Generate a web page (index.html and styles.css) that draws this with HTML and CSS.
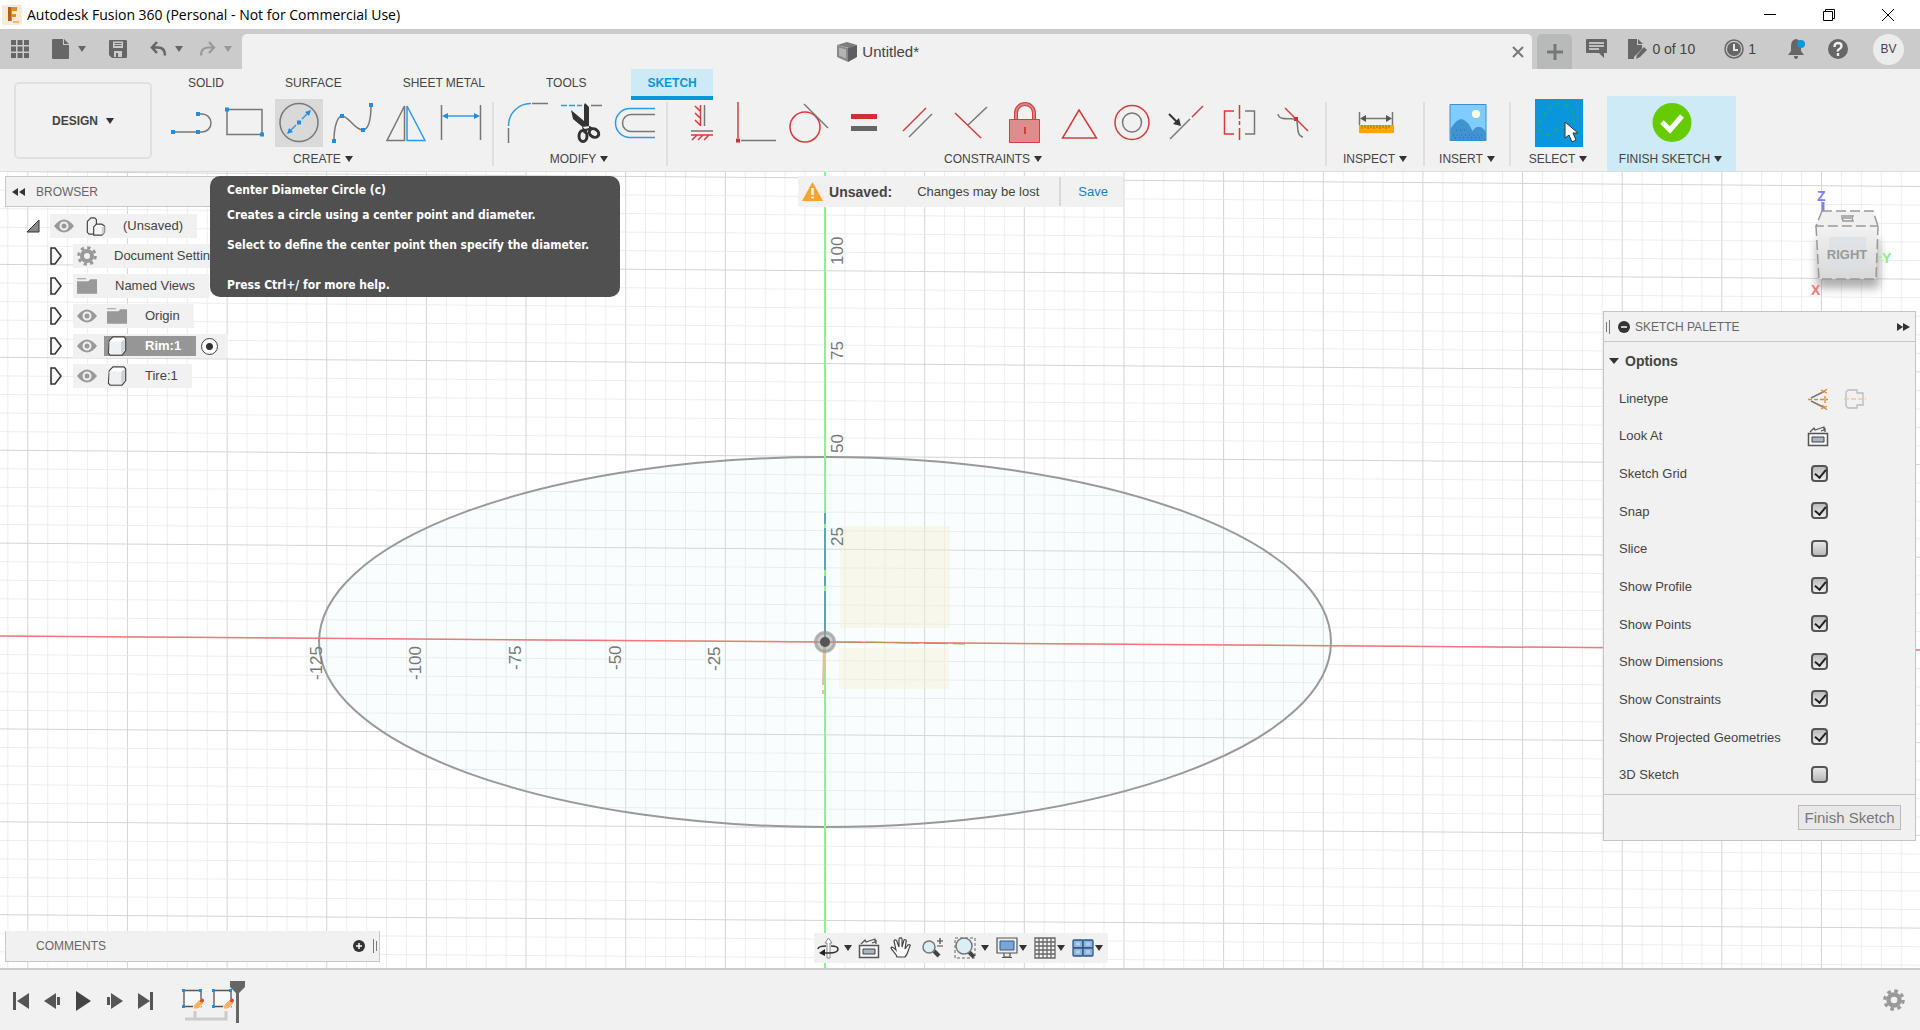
FILE: index.html
```html
<!DOCTYPE html>
<html lang="en">
<head>
<meta charset="utf-8">
<title>Autodesk Fusion 360 (Personal - Not for Commercial Use)</title>
<link rel="stylesheet" href="styles.css">
</head>
<body>
<header class="titlebar">
  <svg class="app-logo" width="20" height="20" viewBox="0 0 20 20"><rect width="20" height="20" rx="1" fill="#fbe9d7"/><path d="M6 2h9v4h-5v3h4v3h-4v4H6z" fill="#e08a2c"/><path d="M6 2h3v14H6z" fill="#b45f14"/><path d="M11 16h6v2h-6z" fill="#f0b878"/></svg>
  <span class="title-text">Autodesk Fusion 360 (Personal - Not for Commercial Use)</span>
  <div class="window-buttons">
    <button aria-label="Minimize"><svg width="14" height="14" viewBox="0 0 14 14"><path d="M1 6.500h12" class="win"/></svg></button>
    <button aria-label="Restore"><svg width="14" height="14" viewBox="0 0 14 14"><path d="M1.500 3.500h9v9h-9zM3.500 3.500v-2h9v9h-2" class="win"/></svg></button>
    <button aria-label="Close"><svg width="14" height="14" viewBox="0 0 14 14"><path d="M1 1l12 12M13 1L1 13" class="win"/></svg></button>
  </div>
</header>

<div class="appbar">
  <div class="quick">
    <button class="q-grid" aria-label="Data panel"><svg width="18" height="18" viewBox="0 0 18 18"><path d="M0 0h5v5H0zM6.500 0h5v5h-5zM13 0h5v5h-5zM0 6.500h5v5H0zM6.500 6.500h5v5h-5zM13 6.500h5v5h-5zM0 13h5v5H0zM6.500 13h5v5h-5zM13 13h5v5h-5z" fill="#666"/></svg></button>
    <button class="q-file" aria-label="File"><svg width="18" height="20" viewBox="0 0 18 20"><path d="M1 0h10v6h6v13q0 1-1 1H1q-1 0-1-1V1q0-1 1-1zM12 0l5 5h-5z" fill="#666"/></svg><i class="tri"></i></button>
    <button class="q-save" aria-label="Save"><svg width="18" height="18" viewBox="0 0 18 18"><path fill-rule="evenodd" d="M1 0h16q1 0 1 1v16q0 1-1 1H3l-3-3V1q0-1 1-1zM4 1.500V8h10V1.500zM5 11v6h8v-6zM7 13h2v4H7zM5.500 3h7v1h-7zM5.500 5h7v1h-7z" fill="#666"/></svg></button>
    <button class="q-undo" aria-label="Undo"><svg width="17" height="17" viewBox="0 0 17 17"><path d="M7 1L2 6.500 7 12M2 6.500h6c5 0 7 3 7 8" fill="none" stroke="#666" stroke-width="2.600"/></svg><i class="tri"></i></button>
    <button class="q-redo" aria-label="Redo"><svg width="17" height="17" viewBox="0 0 17 17"><path d="M10 1l5 5.500-5 5.500M15 6.500H9c-5 0-7 3-7 8" fill="none" stroke="#999" stroke-width="2.200"/></svg><i class="tri"></i></button>
  </div>
  <div class="doc-tab">
    <svg width="20" height="20" viewBox="0 0 20 20"><path d="M0 3l10-3 10 3-8 3z" fill="#7c7c7c"/><path d="M0 3l11 3v14L0 15z" fill="#8a8a8a"/><path d="M2 5.500l7 2v9l-7-3z" fill="#b4b4b4"/><path d="M11 6l9-3v12l-9 5z" fill="#5e5e5e"/></svg>
    <span>Untitled*</span>
    <button class="tab-close" aria-label="Close tab"><svg width="12" height="12" viewBox="0 0 12 12"><path d="M1 1l10 10M11 1L1 11" stroke="#777" stroke-width="2"/></svg></button>
  </div>
  <button class="new-tab" aria-label="New tab"><svg width="18" height="18" viewBox="0 0 18 18"><path d="M9 1v16M1 9h16" stroke="#777" stroke-width="3"/></svg></button>
  <div class="status">
    <button aria-label="Comments"><svg width="21" height="20" viewBox="0 0 21 20"><path d="M1 0h19q1 0 1 1v13h-3v5l-5-5H0V1q0-1 1-1z" fill="#666"/><path d="M3 4h15M3 7h15M3 10h10" stroke="#ddd" stroke-width="1.500"/></svg></button>
    <button class="s-docs"><svg width="20" height="20" viewBox="0 0 20 20"><path d="M0 0h9v6h5v4L6 18v2H0zM10 0l5 5h-5z" fill="#666"/><path d="M8 20l1-4 7-8 3 3-7 7z" fill="#666"/></svg><span>0 of 10</span></button>
    <button class="s-jobs"><svg width="20" height="20" viewBox="0 0 20 20"><circle cx="10" cy="10" r="9" fill="none" stroke="#666" stroke-width="1.500"/><circle cx="10" cy="10" r="7" fill="#666"/><path d="M10 5v6h4" fill="none" stroke="#e6e6e6" stroke-width="2"/></svg><span>1</span></button>
    <button class="s-bell" aria-label="Notifications"><svg width="19" height="20" viewBox="0 0 19 20"><path d="M9 0q5 1 5 7v5l3 4H1l3-4V7q0-6 5-7zM7 17h4q0 3-2 3t-2-3z" fill="#666"/><circle cx="14" cy="5" r="4" fill="#0a96e0"/></svg></button>
    <button class="s-help" aria-label="Help"><svg width="20" height="20" viewBox="0 0 20 20"><circle cx="10" cy="10" r="10" fill="#666"/><path d="M6.500 8q0-4 3.500-4t3.500 3q0 2-2 3t-1.500 2.500M10 14v3" fill="none" stroke="#eee" stroke-width="2.400"/></svg></button>
    <button class="avatar">BV</button>
  </div>
</div>

<div class="ribbon">
  <button class="workspace">DESIGN <i class="tri"></i></button>
  <div class="ribbon-main">
    <nav class="tabs">
      <a href="#solid">SOLID</a><a href="#surface">SURFACE</a><a href="#sheet">SHEET METAL</a><a href="#tools">TOOLS</a><a href="#sketch" class="active">SKETCH</a>
    </nav>
    <div class="groups">
      <section class="group create">
        <div class="tools">
          <button aria-label="Line"><svg viewBox="0 0 48 48"><path class="g" d="M6 33h25M31 15h4a9 9 0 0 1 0 18h-4"/><path class="bf" d="M4 31h4v4H4zM29 31h4v4h-4zM29 13h4v4h-4z"/></svg></button>
          <button aria-label="Rectangle"><svg viewBox="0 0 48 48"><path class="g" d="M6 10.500h35v25H6z"/><path class="bf" d="M4 8.500h4v4H4zM39 33.500h4v4h-4z"/></svg></button>
          <button class="on" aria-label="Circle"><svg viewBox="0 0 48 48"><circle class="g" cx="24" cy="23.500" r="19"/><path class="b" d="M14 33l7-7M27 20l7-7"/><path class="bf" d="M22 21.500h4v4h-4zM12 35l2-6 4 4zM36 11l-6 2 4 4z"/></svg></button>
          <button aria-label="Spline"><svg viewBox="0 0 48 48"><path class="g" d="M5 42C5 26 9 17 13 17c7 0 12 14 21 14 7-1 8-13 8-25"/><path class="bf" d="M3 40h4v4H3zM11 15h4v4h-4zM32 29h4v4h-4zM40 4h4v4h-4z"/></svg></button>
          <button aria-label="Mirror"><svg viewBox="0 0 48 48"><path class="g" d="M4 41.500h17.500V7z"/><path class="b" d="M24 7v34.500h18z"/></svg></button>
          <button aria-label="Sketch dimension"><svg viewBox="0 0 48 48"><path class="g" d="M4.500 6v35M43.500 6v35"/><path class="b" d="M8 17h32"/><path class="bf" d="M5 17l6-3v6zM43 17l-6-3v6z"/></svg></button>
        </div>
        <button class="group-label">CREATE <i class="tri"></i></button>
      </section>
      <section class="group modify">
        <div class="tools">
          <button aria-label="Fillet"><svg viewBox="0 0 48 48"><path class="g" d="M28 4.500h16M4.500 29v15"/><path class="b" d="M4.500 27A22 22 0 0 1 27 4.500"/></svg></button>
          <button aria-label="Trim"><svg viewBox="0 0 48 48"><path class="b" stroke-dasharray="6 2" d="M3 6.500h21"/><path class="g" d="M33 6.500h11"/><path d="M13 11l2 9 12 10 4-1V8l-4-4-1 2v16zM24 28l8-1 4 3-6 1-4 4z" fill="#333"/><g fill="none" stroke="#333" stroke-width="3"><ellipse cx="25" cy="37" rx="4" ry="5.500"/><ellipse cx="36" cy="34" rx="5" ry="4" transform="rotate(35 36 34)"/></g></svg></button>
          <button aria-label="Offset"><svg viewBox="0 0 48 48"><path class="b" stroke-width="2" d="M43 9.500H18a14.500 14.500 0 0 0 0 29h25"/><path class="g" d="M43 15.500H19a8.500 8.500 0 0 0 0 17h24"/></svg></button>
        </div>
        <button class="group-label">MODIFY <i class="tri"></i></button>
      </section>
      <section class="group constraints">
        <div class="tools">
          <button aria-label="Horizontal/Vertical"><svg viewBox="0 0 48 48"><path class="g" d="M26.500 6v21M13 32h22"/><path class="r" d="M22.500 6v21M22 12l-5-5M22 19l-5-5M22 26l-5-5M13 36h22M14 41l5-5M20 41l5-5M26 41l5-5"/></svg></button>
          <button aria-label="Coincident"><svg viewBox="0 0 48 48"><path class="r" d="M6 3v36"/><path class="g" d="M9 41.500h35"/><path class="rf" d="M4 39.500h4v4H4z"/></svg></button>
          <button aria-label="Tangent"><svg viewBox="0 0 48 48"><circle class="r" cx="19" cy="28" r="15"/><path class="g" d="M18 5l24 24"/></svg></button>
          <button aria-label="Equal"><svg viewBox="0 0 48 48"><path class="rf" d="M11 15h26v5H11z"/><path fill="#666" d="M11 27h26v5H11z"/></svg></button>
          <button aria-label="Parallel"><svg viewBox="0 0 48 48"><path class="r" d="M9 32L32 9"/><path class="g" d="M15 38l23-23"/></svg></button>
          <button aria-label="Perpendicular"><svg viewBox="0 0 48 48"><path class="r" d="M7 14l26 25"/><path class="g" d="M20 26L39 8"/></svg></button>
          <button aria-label="Fix"><svg viewBox="0 0 48 48"><path d="M14 20v-6a9 9 0 0 1 18 0v6" fill="none" stroke="#cf4040" stroke-width="4"/><path d="M14 20v-6a9 9 0 0 1 18 0v6" fill="none" stroke="#e08080" stroke-width="2"/><path d="M7.500 20.500h30v23h-30z" fill="#df8c8c" stroke="#cf4040"/><path d="M23 28v7" stroke="#c22" stroke-width="1.500"/></svg></button>
          <button aria-label="Midpoint"><svg viewBox="0 0 48 48"><path class="r" d="M6.500 39h34L23 11z"/></svg></button>
          <button aria-label="Concentric"><svg viewBox="0 0 48 48"><circle class="r" cx="22" cy="23.500" r="17"/><circle class="g" cx="22" cy="23.500" r="9.500"/></svg></button>
          <button aria-label="Collinear"><svg viewBox="0 0 48 48"><path class="g" d="M6 40l20-20"/><path class="r" d="M28 18L39 7"/><path d="M5 15l8 8" stroke="#333" stroke-width="2"/><path d="M17 27l-8-2 6-6z" fill="#333"/></svg></button>
          <button aria-label="Symmetry"><svg viewBox="0 0 48 48"><path class="r" d="M16 12H6.500v23H16M21.500 6v14M21.500 22v4M21.500 29v12"/><path class="g" d="M27 12h9.500v23H27"/></svg></button>
          <button aria-label="Curvature"><svg viewBox="0 0 48 48"><path class="g" d="M6 15c1 7 12 4 16 5M25 22c1 8 0 15 6 16"/><path class="r" d="M13 9l23 23"/><path class="rf" d="M22 18h4v4h-4z"/></svg></button>
        </div>
        <button class="group-label">CONSTRAINTS <i class="tri"></i></button>
      </section>
      <section class="group inspect">
        <div class="tools"><button aria-label="Measure"><svg viewBox="0 0 48 48"><path class="g" d="M7.500 13v13M40.500 13v13M10 19.500h28"/><path d="M8 19.500l6-3.500v7zM40 19.500l-6-3.500v7z" fill="#555"/><path d="M7 26h35v8H7z" fill="#ffa500"/><path d="M10 26v4M13 26v3M16 26v4M19 26v3M22 26v4M25 26v3M28 26v4M31 26v3M34 26v4M37 26v3" stroke="#a06a20"/></svg></button></div>
        <button class="group-label">INSPECT <i class="tri"></i></button>
      </section>
      <section class="group insert">
        <div class="tools"><button aria-label="Insert image"><svg viewBox="0 0 48 48"><path d="M6 5.500h36v36H6z" fill="#80ccff" stroke="#3a8fcf"/><circle cx="32" cy="15" r="4" fill="#fffde0"/><path d="M6.500 30q6-10 11-10 6 1 11 12 4-5 7-4 3 0 6.500 5v8h-35.500z" fill="#3f93cf"/><path d="M9 36h30M12 31h10M11 39h28" stroke="#2a6fa8" stroke-dasharray="1 3"/></svg></button></div>
        <button class="group-label">INSERT <i class="tri"></i></button>
      </section>
      <section class="group select">
        <div class="tools"><button aria-label="Select"><svg viewBox="0 0 48 48"><path d="M0 0h48v48H0z" fill="#0a96db"/><path d="M30 28c8-1 11-6 8-14-3-9-12-11-20-8C10 9 9 16 5 24c-2 6 1 12 8 12 8-1 5-7 17-8z" fill="none" stroke="#1fa97a" stroke-width="1.500" stroke-dasharray="5 4"/><path d="M30 23v16l4-3 3 7 4-2-3-7h5z" fill="#fff" stroke="#333"/></svg></button></div>
        <button class="group-label">SELECT <i class="tri"></i></button>
      </section>
      <section class="group finish">
        <div class="tools"><button aria-label="Finish sketch"><svg viewBox="0 0 48 48"><circle cx="24" cy="23.500" r="19.500" fill="#6c0"/><path d="M14 23l8 8 12-14" fill="none" stroke="#fff" stroke-width="5"/></svg></button></div>
        <button class="group-label">FINISH SKETCH <i class="tri"></i></button>
      </section>
    </div>
  </div>
</div>

<main class="workspace-area">
  <svg class="scene" viewBox="0 172 1920 796" preserveAspectRatio="xMidYMid slice">
    <g id="grid"></g>
    <ellipse cx="825" cy="642" rx="506" ry="185" fill="#d8f4fa" fill-opacity=".16"/>
    <path d="M840 526h110v102H840zM839 648h110v41H839z" fill="#f4eed2" fill-opacity=".4"/>
    <ellipse cx="825" cy="642" rx="506" ry="185" fill="none" stroke="#999" stroke-width="2"/>
    <path d="M0 636L1920 650" stroke="#f07878" stroke-width="1.500"/>
    <path d="M825 172v796" stroke="#8ef08e" stroke-width="2"/>
    <path d="M825 513v11m0 4v42m0 6v10m0 5v46" stroke="#5aa5b8" stroke-width="2"/>
    <path d="M824 645l-1 40m0 5v4" stroke="#f5b89a" stroke-width="2"/>
    <path d="M837 642h28l40 1 60 1" stroke="#a8a050" fill="none" stroke-dasharray="24 5"/>
    <circle cx="825" cy="642" r="9.500" fill="#999" fill-opacity=".5" stroke="#999" stroke-width="3" stroke-opacity=".7"/><circle cx="825" cy="642" r="5" fill="#555"/>
    <g class="axis-label">
      <text transform="translate(843 265) rotate(-90)">100</text>
      <text transform="translate(843 360) rotate(-90)">75</text>
      <text transform="translate(843 453) rotate(-90)">50</text>
      <text transform="translate(843 546) rotate(-90)">25</text>
      <text transform="translate(322 680) rotate(-90)">-125</text>
      <text transform="translate(421 680) rotate(-90)">-100</text>
      <text transform="translate(521 670) rotate(-90)">-75</text>
      <text transform="translate(621 670) rotate(-90)">-50</text>
      <text transform="translate(720 671) rotate(-90)">-25</text>
    </g>
  </svg>

  <div class="col left">
    <section class="browser">
      <header class="panel-head"><svg width="14" height="10" viewBox="0 0 14 10"><path d="M7 1v8L1 5zM14 1v8L8 5z" fill="#333"/></svg><span>BROWSER</span></header>
      <ul class="tree">
        <li class="root"><svg class="twist open" width="16" height="16" viewBox="0 0 16 16"><path d="M14 2v12H2z" fill="#888" stroke="#333"/></svg><span class="node"><svg class="eye" viewBox="0 0 20 16"><use href="#eye"/></svg><svg class="ico" viewBox="0 0 22 22"><path d="M2 6l4-4h4l2 2v15l-1 1H4l-2-2z" fill="#f0f1f2" stroke="#444" stroke-width="1.300"/><path d="M9 12l3-3h6l3 2v7l-3 3H9z" fill="#f7f7f7" stroke="#444" stroke-width="1.300"/><path d="M18 13l3-2v7l-3 3z" fill="#ccd0d4"/></svg><span class="t">(Unsaved)</span></span></li>
        <li><svg class="twist" viewBox="0 0 16 20"><use href="#tw"/></svg><span class="node wide"><svg class="eye gear" viewBox="0 0 20 20"><use href="#gear"/></svg><span class="t">Document Settings</span></span></li>
        <li><svg class="twist" viewBox="0 0 16 20"><use href="#tw"/></svg><span class="node"><svg class="ico first" viewBox="0 0 22 20"><use href="#folder"/></svg><span class="t">Named Views</span></span></li>
        <li><svg class="twist" viewBox="0 0 16 20"><use href="#tw"/></svg><span class="node"><svg class="eye" viewBox="0 0 20 16"><use href="#eye"/></svg><span class="pick"><svg class="ico" viewBox="0 0 22 20"><use href="#folder"/></svg><span class="t">Origin</span></span></span></li>
        <li><svg class="twist" viewBox="0 0 16 20"><use href="#tw"/></svg><span class="node"><svg class="eye" viewBox="0 0 20 16"><use href="#eye"/></svg><span class="pick sel"><svg class="ico" viewBox="0 0 22 22"><use href="#cube"/></svg><span class="t">Rim:1</span></span><input class="dot" type="radio" name="component" aria-label="Activate Rim:1" checked></span></li>
        <li><svg class="twist" viewBox="0 0 16 20"><use href="#tw"/></svg><span class="node"><svg class="eye" viewBox="0 0 20 16"><use href="#eye"/></svg><span class="pick"><svg class="ico" viewBox="0 0 22 22"><use href="#cube"/></svg><span class="t">Tire:1</span></span></span></li>
      </ul>
    </section>
    <div class="tooltip" role="tooltip"><p>Center Diameter Circle (c)</p><p>Creates a circle using a center point and diameter.</p><p class="more">Select to define the center point then specify the diameter.</p><p class="hint">Press Ctrl+/ for more help.</p></div>
    <section class="comments"><span>COMMENTS</span><button aria-label="Expand comments"><svg width="12" height="12" viewBox="0 0 12 12"><circle cx="6" cy="6" r="6" fill="#333"/><path d="M6 3v6M3 6h6" stroke="#fff" stroke-width="1.500"/></svg></button><svg class="grip" width="4" height="14" viewBox="0 0 4 14"><path d="M.5 0v14M3.500 2v10" stroke="#777"/></svg></section>
  </div>

  <div class="col middle">
    <div class="message"><svg width="21" height="20" viewBox="0 0 21 20"><path d="M10.500 0L21 19H0z" fill="#f9a32b"/><path d="M10.500 6v7M10.500 14.500v2" stroke="#fff" stroke-width="2.500"/></svg><strong>Unsaved:</strong><span>Changes may be lost</span><a href="#save">Save</a></div>
    <div class="navbar">
      <button class="n-orbit" aria-label="Orbit"><svg width="22" height="22" viewBox="0 0 22 22"><path d="M10 21V6H8l3.500-5L15 6h-2v15z" fill="#fff" stroke="#888"/><path d="M9 9c-4 0-8 1-8 3M14 9c5 0 7 1 7 3 0 3-5 4-9 4H6" fill="none" stroke="#333" stroke-width="1.600"/><path d="M2 16l6-4v7z" fill="#222"/></svg><i class="tri"></i></button>
      <button class="n-look" aria-label="Look at"><svg width="22" height="22" viewBox="0 0 22 22"><use href="#look"/></svg></button>
      <button class="n-hand" aria-label="Pan"><svg width="22" height="22" viewBox="0 0 22 22"><path d="M7 20c-1-4-5-6-6-9 1-2 3 0 5 2L4 4c1-2 3-1 3 1l2 5V2c1-2 3-1 3 0v8l2-7c1-1 3 0 2 2l-1 7 3-4c1-1 3 0 2 1-2 4-2 8-5 11z" fill="#fff" stroke="#444" stroke-width="1.200"/></svg></button>
      <button class="n-zoom" aria-label="Zoom"><svg width="22" height="22" viewBox="0 0 22 22"><path d="M12 14l5 5" stroke="#444" stroke-width="4"/><circle cx="7" cy="10" r="6" fill="#dceef5" stroke="#777" stroke-width="1.500"/><path d="M15 4h6M18 1v6M15 9h6" stroke="#444" stroke-width="1.200"/></svg></button>
      <button class="n-fit" aria-label="Zoom window"><svg width="22" height="22" viewBox="0 0 22 22"><path d="M1 1h20v20H1z" fill="none" stroke="#666" stroke-dasharray="3 2"/><path d="M14 14l6 6" stroke="#444" stroke-width="4"/><circle cx="10" cy="9" r="8" fill="#dceef5" stroke="#777" stroke-width="1.500"/></svg><i class="tri"></i></button>
      <button class="n-disp" aria-label="Display settings"><svg width="22" height="22" viewBox="0 0 22 22"><path d="M1 1h20v15H1zM8 16v4h6v-4M6 20.500h10" fill="#eee" stroke="#555" stroke-width="1.200"/><path d="M4 4h14v9H4z" fill="#7aa6d4" stroke="#345d8c"/></svg><i class="tri"></i></button>
      <button class="n-grid" aria-label="Grid settings"><svg width="22" height="22" viewBox="0 0 22 22"><path d="M1 1h20v20H1zM5 1v20M9 1v20M13 1v20M17 1v20M1 5h20M1 9h20M1 13h20M1 17h20" fill="#f4f4f4" stroke="#666" stroke-width="1.300"/></svg><i class="tri"></i></button>
      <button class="n-view" aria-label="Viewports"><svg width="22" height="22" viewBox="0 0 22 22"><g fill="#8db4de" stroke="#2f5480" stroke-width="1.300"><rect x="1" y="3" width="10" height="8" rx="1"/><rect x="11" y="3" width="10" height="8" rx="1"/><rect x="1" y="11" width="10" height="8" rx="1"/><rect x="11" y="11" width="10" height="8" rx="1"/></g><path d="M4 7h4M14 7h4M4 15h4M14 15h4" stroke="#b4d0ee" stroke-width="3"/></svg><i class="tri"></i></button>
    </div>
  </div>

  <div class="col right">
    <svg class="viewcube" width="90" height="124" viewBox="0 -4 90 124">
      <defs><filter id="soft" x="-30%" y="-30%" width="160%" height="160%"><feGaussianBlur stdDeviation="5"/></filter><linearGradient id="face" x1="0" y1="0" x2="0" y2="1"><stop offset="0" stop-color="#f2f2f2"/><stop offset="1" stop-color="#d8d8d8"/></linearGradient></defs>
      <path d="M14 50h62v48H14z" fill="#777" filter="url(#soft)" opacity=".6"/>
      <path d="M20 12v12" stroke="#8080f0" stroke-width="3"/>
      <path d="M19 21h51l5 15H13z" fill="#f0f0f0"/><path d="M13 36h62l-2 53H16z" fill="url(#face)"/>
      <path d="M26 47h37v32H26z" fill="#dcdfe3" opacity=".7"/>
      <path d="M19 21h51l5 15M19 21l-6 15h62M13 36l3 53h57l2-53" fill="none" stroke="#999" stroke-width="1.500" stroke-dasharray="10 4"/>
      <path d="M38 26h12l-1 2 1 3H40l-1-3h9" fill="none" stroke="#999" stroke-width="1.500"/>
      <text x="44" y="69" text-anchor="middle" class="cube-text">RIGHT</text>
      <text x="14" y="11" class="ax z">Z</text><text x="79" y="73" class="ax y">Y</text><text x="8" y="105" class="ax x">X</text><path d="M75 67h4" stroke="#8e8"/>
    </svg>
    <section class="palette">
      <header class="palette-head"><svg class="grip" width="4" height="14" viewBox="0 0 4 14"><path d="M.5 2v10M3.500 0v14" stroke="#777"/></svg><svg width="12" height="12" viewBox="0 0 12 12"><circle cx="6" cy="6" r="6" fill="#333"/><path d="M3 6h6" stroke="#fff" stroke-width="1.500"/></svg><span>SKETCH PALETTE</span><svg class="collapse" width="13" height="10" viewBox="0 0 13 10"><path d="M0 1v8l6-4zM6 1v8l7-4z" fill="#333"/></svg></header>
      <h2><i class="tri big"></i>Options</h2>
      <div class="options">
        <div class="opt"><span>Linetype</span><button aria-label="Construction"><svg width="22" height="22" viewBox="0 0 22 22"><path d="M4 10L18 3M4 13l14 7" stroke="#777" stroke-width="1.500"/><path d="M1 11.500h20" stroke="#e08a3c" stroke-width="1.500" stroke-dasharray="4 2"/><path d="M18 8v7M14 2l6 3M20 1l-5 4M14 21l6-3M15 17l5 5" stroke="#e08a3c" stroke-width="1.300"/></svg></button><button aria-label="Centerline"><svg width="22" height="22" viewBox="0 0 22 22"><path d="M2 8V4l2-2h9v3h6v4M2 14v4l2 2h9v-3h6v-4M2 8v6M19 9v4" fill="none" stroke="#bbb" stroke-width="1.300"/><path d="M0 11h22" stroke="#ecc9a4" stroke-width="1.300" stroke-dasharray="5 2"/></svg></button></div>
        <div class="opt"><span>Look At</span><button aria-label="Look At"><svg width="22" height="22" viewBox="0 0 22 22"><use href="#look"/></svg></button></div>
        <label class="opt"><span>Sketch Grid</span><input type="checkbox" checked></label>
        <label class="opt"><span>Snap</span><input type="checkbox" checked></label>
        <label class="opt"><span>Slice</span><input type="checkbox"></label>
        <label class="opt"><span>Show Profile</span><input type="checkbox" checked></label>
        <label class="opt"><span>Show Points</span><input type="checkbox" checked></label>
        <label class="opt"><span>Show Dimensions</span><input type="checkbox" checked></label>
        <label class="opt"><span>Show Constraints</span><input type="checkbox" checked></label>
        <label class="opt"><span>Show Projected Geometries</span><input type="checkbox" checked></label>
        <label class="opt"><span>3D Sketch</span><input type="checkbox"></label>
      </div>
      <footer><button class="finish-btn">Finish Sketch</button></footer>
    </section>
  </div>
</main>

<footer class="timeline">
  <div class="player">
    <button aria-label="Go to start"><svg width="17" height="20" viewBox="0 0 17 20"><path d="M0 1h3v18H0zM16 2v16L4 10z" fill="#555"/></svg></button>
    <button aria-label="Step back"><svg width="17" height="20" viewBox="0 0 17 20"><path d="M12 2v16L0 10zM13 6h3v8h-3z" fill="#555"/></svg></button>
    <button aria-label="Play"><svg width="17" height="20" viewBox="0 0 17 20"><path d="M1 0v20l15-10z" fill="#444"/></svg></button>
    <button aria-label="Step forward"><svg width="17" height="20" viewBox="0 0 17 20"><path d="M5 2v16l12-8zM1 6h3v8H1z" fill="#555"/></svg></button>
    <button aria-label="Go to end"><svg width="17" height="20" viewBox="0 0 17 20"><path d="M1 2v16l12-8zM13 1h3v18h-3z" fill="#555"/></svg></button>
  </div>
  <svg class="history" width="66" height="44" viewBox="0 0 66 44">
    <path d="M4 38h41v-8M14 30v8" fill="none" stroke="#ccc" stroke-width="3"/>
    <g id="feat"><path d="M3 9.500h17v16H3z" fill="#f8f8f8" stroke="#555" stroke-width="1.300"/><path d="M1 8h3v3H1zM18 8h3v3h-3zM1 24h3v3H1z" fill="#1a8fe3"/><path d="M12 28l1-4 6-6 4 4-6 6z" fill="#fbb450" stroke="#f1f1f1"/><circle cx="21" cy="19.500" r="2" fill="#d44"/></g>
    <use href="#feat" x="30"/>
    <path d="M49 0h15v6l-6 6v30h-3V12l-6-6z" fill="#666"/>
  </svg>
  <button class="settings" aria-label="Settings"><svg width="22" height="22" viewBox="0 0 20 20"><use href="#gear"/></svg></button>
</footer>

<svg width="0" height="0" class="symbols">
  <defs>
    <g id="eye"><path fill-rule="evenodd" d="M0 8Q10-5 20 8 10 21 0 8zM10 3.500a4.500 4.500 0 1 0 0 9 4.500 4.500 0 0 0 0-9z" fill="#999"/><circle cx="10" cy="8" r="2.500" fill="#999"/></g>
    <path id="tw" d="M3 2h4l6 8-6 8H3z" fill="#fafafa" stroke="#333" stroke-width="1.600"/>
    <path id="folder" d="M0 2h9l1 1H0zM0 5h12l2-2h7v15H0z" fill="#999"/>
    <g id="gear"><circle cx="10" cy="10" r="5" fill="none" stroke="#999" stroke-width="4"/><circle cx="10" cy="10" r="8.300" fill="none" stroke="#999" stroke-width="3" stroke-dasharray="3.300 3.218"/></g>
    <g id="cube"><path d="M2 5l4-4h12l2 2v13l-4 5H3l-2-2z" fill="#fff" stroke="#444" stroke-width="1.300"/><path d="M15 7l4-4v12l-4 5z" fill="#ccd0d4"/><path d="M2 6h13v14H3z" fill="#eef0f2"/></g>
    <g id="look"><path d="M1.500 8.500h19v12h-19z" fill="#f8f8f8" stroke="#555" stroke-width="1.500"/><path d="M5 12h12v5H5z" fill="#aab4c4" stroke="#444"/><path d="M3 7l4-4 1 2 9-3v3l-3 1M18 3v4" fill="none" stroke="#555" stroke-width="1.200"/></g>
  </defs>
</svg>
<script src="grid.js"></script>
</body>
</html>
```
FILE: styles.css
```css
* { box-sizing: border-box; }
body { margin: 0; min-height: 100vh; display: flex; flex-direction: column; background: #f1f1f1; color: #444; font: 12px/16px "Liberation Sans", Arial, sans-serif; }
button { border: 0; padding: 0; background: none; font: inherit; color: inherit; display: inline-flex; align-items: center; }
a { color: inherit; text-decoration: none; }
svg { flex: none; display: block; }
p, h2, ul { margin: 0; padding: 0; }
.symbols { position: absolute; }
.tri { width: 0; height: 0; border: 4px solid transparent; border-top: 6px solid #333; border-bottom: 0; display: inline-block; }
.tri.big { border-width: 6px 5px 0; }

.titlebar { height: 29px; background: #fff; display: flex; align-items: center; padding: 0 25px 0 2px; color: #000; }
.title-text { margin-left: 5px; font: 14px/20px "Open Sans", "Noto Sans", sans-serif; }
.window-buttons { margin-left: auto; display: flex; gap: 45px; }
.win { fill: none; stroke: #000; }

.appbar { height: 40px; background: #cbcbcb; display: flex; align-items: flex-end; }
.quick { width: 242px; height: 40px; display: flex; align-items: center; padding-left: 11px; }
.quick button { gap: 8px; }
.q-file { margin-left: 23px; }
.q-save { margin-left: 23px; }
.q-undo { margin-left: 23px; }
.q-redo { margin-left: 16px; }
.quick .tri { border-top-color: #666; }
.q-redo .tri { border-top-color: #999; }
.doc-tab { flex: 1; height: 35px; background: #f1f1f1; border-radius: 5px 5px 0 0; display: flex; align-items: center; justify-content: center; gap: 5px; font-size: 15px; position: relative; padding-right: 18px; }
.tab-close { position: absolute; right: 8px; top: 12px; }
.new-tab { width: 35px; height: 35px; margin-left: 5px; background: #b8bab9; border-radius: 5px 5px 0 0; justify-content: center; }
.status { height: 40px; display: flex; align-items: center; padding: 0 16px 0 14px; font-size: 14px; }
.s-docs { margin-left: 21px; gap: 4px; }
.s-jobs { margin-left: 29px; gap: 4px; }
.s-bell { margin-left: 31px; }
.s-help { margin-left: 22px; }
.status .avatar { margin-left: 25px; width: 31px; height: 31px; border-radius: 50%; background: #ececec; justify-content: center; font-size: 12px; }

.ribbon { display: flex; border-bottom: 1px solid #ddd; padding-left: 14px; height: 103px; }
.workspace { width: 138px; height: 77px; margin-top: 13px; border: 2px solid #e0e0e0; border-radius: 5px; justify-content: center; gap: 8px; font-weight: bold; }
.tabs { display: flex; gap: 29px; padding-left: 20px; height: 27px; position: relative; z-index: 1; }
.tabs a { height: 31px; padding: 6px 16px 0; }
.tabs .active { background: #cdeaf6; color: #0a96db; font-weight: bold; border-bottom: 4px solid #0a96db; }
.groups { display: flex; height: 75px; }
.group { display: flex; flex-direction: column; align-items: center; padding-top: 3px; position: relative; }
.group:not(.select):not(.finish)::after { content: ""; position: absolute; right: 0; top: 6px; width: 2px; height: 64px; background: #dfdfdf; }
.create { padding: 3px 9px 0 15px; }
.modify { padding: 3px 8px 0 10px; }
.constraints { padding: 3px 7px 0 10px; }
.inspect { width: 98px; }
.insert { width: 86px; }
.select { width: 96px; }
.finish { width: 129px; background: #cdeaf6; }
.tools { display: flex; gap: 6px; }
.tools svg { width: 48px; height: 48px; }
.tools .on { background: #d9d9d9; }
.group-label { gap: 4px; margin-top: 4px; height: 16px; padding-right: 2px; }
.create .group-label, .modify .group-label { padding-right: 6px; }
.constraints .group-label { padding-right: 12px; }
.g, .b, .r { fill: none; stroke: #777; stroke-width: 1.500px; }
.b { stroke: #2f9be4; }
.r { stroke: #d43c3c; }
.bf { fill: #1a8fe3; }
.rf { fill: #d03030; }

.workspace-area { flex: 1; min-height: 700px; position: relative; display: grid; grid-template-columns: 375px 1fr 375px; padding: 4px 4px 5px 5px; background: #fff; }
.scene { position: absolute; inset: 0; width: 100%; height: 100%; }
.axis-label { font: 17px "Liberation Sans", Arial, sans-serif; fill: #777; }
.minor { stroke: #e6e9eb; stroke-width: 1px; opacity: .8; }
.major { stroke: #d2d4d6; stroke-width: 1px; }
.col { position: relative; display: flex; flex-direction: column; justify-content: space-between; }
.panel-head { height: 31px; border: 1px solid #c8c8c8; background: #f1f1f1; display: flex; align-items: center; padding-left: 5px; gap: 11px; color: #666; }
.tree { list-style: none; padding-top: 4px; font-size: 13px; }
.tree li { height: 30px; display: flex; align-items: center; padding-left: 43px; }
.tree .root { padding-left: 20px; }
.twist { width: 16px; height: 20px; margin-right: 9px; }
.root .twist { height: 16px; }
.node { height: 24px; background: #f1f1f1; display: flex; align-items: center; padding: 0 14px 0 4px; }
.node.wide { width: 180px; }
.eye { width: 20px; height: 16px; }
.gear { height: 20px; }
.ico { width: 21px; height: 20px; margin-left: 11px; }
.ico.first { margin-left: 0; }
.node .t { margin-left: 17px; white-space: nowrap; }
.pick { display: flex; align-items: center; height: 20px; margin-left: 7px; }
.pick .ico { margin-left: 3px; }
.pick.sel { background: #969696; color: #fff; font-weight: bold; padding-right: 15px; }
.dot { appearance: none; width: 17px; height: 17px; margin: 0 -4px 0 5px; border: 1px solid #444; border-radius: 50%; background: radial-gradient(#333 0 3px, #fff 4px); }
.tooltip { position: absolute; left: 205px; top: 0; width: 410px; height: 121px; border-radius: 10px; background: #505050; color: #fff; padding: 4px 17px; font: bold 12px/20px "DejaVu Sans Condensed", "Noto Sans", sans-serif; white-space: nowrap; z-index: 2; }
.tooltip p + p { margin-top: 5px; }
.tooltip p.more { margin-top: 10px; }
.tooltip p.hint { margin-top: 20px; }
.comments { height: 31px; margin-bottom: 1px; border: 1px solid #c8c8c8; border-top: 0; background: #f1f1f1; display: flex; align-items: center; padding: 0 2px 0 30px; color: #666; }
.comments button { margin-left: auto; margin-right: 8px; }
.middle { align-items: center; }
.message { height: 31px; background: #f1f1f1; display: flex; align-items: center; padding: 0 15px 0 4px; font-size: 13px; }
.message strong { font-size: 14px; margin: 0 25px 0 6px; }
.message a { color: #1a7fc4; border-left: 2px solid #d8d8d8; margin-left: 20px; padding-left: 17px; line-height: 29px; }
.navbar { height: 30px; background: #f1f1f1; display: flex; align-items: center; padding: 0 5px 0 3px; }
.navbar .tri { margin-left: 5px; }
.n-look { margin-left: 6px; }
.n-hand, .n-zoom, .n-fit { margin-left: 10px; }
.n-disp, .n-grid, .n-view { margin-left: 7px; }
.navbar .n-disp .tri, .navbar .n-grid .tri, .navbar .n-view .tri { margin-left: 1px; }

.right { align-items: flex-end; justify-content: flex-start; }
.viewcube { margin: 10px 23px 1px 0; }
.cube-text { font: bold 13px "Liberation Sans", Arial, sans-serif; fill: #999; }
.ax { font: bold 14px "Liberation Sans", Arial, sans-serif; }
.z { fill: #8080f0; }
.y { fill: #8e8; }
.x { fill: #f07878; }
.palette { width: 313px; background: #f1f1f1; border: 1px solid #c4c4c4; font-size: 13px; }
.palette-head { height: 30px; border-bottom: 1px solid #c8c8c8; display: flex; align-items: center; font-size: 12px; color: #666; padding: 0 5px 0 2px; }
.palette-head .grip { margin-right: 8px; }
.palette-head span { margin-left: 5px; }
.collapse { margin-left: auto; }
.palette h2 { height: 38px; font-size: 14px; display: flex; align-items: center; padding-left: 5px; gap: 6px; }
.options { display: grid; grid-template-rows: repeat(11, 1fr); height: 414px; padding-left: 15px; }
.opt { display: grid; grid-template-columns: 188px 22px 22px; column-gap: 0; align-items: center; }
.opt span { white-space: nowrap; }
.opt button + button { margin-left: 15px; }
.opt input { appearance: none; width: 17px; height: 17px; margin: 0 0 2px 4px; border: 2px solid #555; border-radius: 4px; background: linear-gradient(#e8e8e8, #b8b8b8); position: relative; }
.opt input:checked { background: linear-gradient(#bbb, #eee); }
.opt input:checked::after { content: ""; position: absolute; left: 4px; top: 0; width: 5px; height: 9px; border: solid #222; border-width: 0 2px 2px 0; transform: rotate(40deg); }
.palette footer { border-top: 1px solid #c4c4c4; height: 46px; display: flex; align-items: center; justify-content: flex-end; padding-right: 14px; }
.finish-btn { width: 103px; height: 25px; border: 1px solid #bbb; background: #e8e8e8; color: #777; font-size: 15px; justify-content: center; white-space: nowrap; }

.timeline { height: 62px; border-top: 2px solid #ccc; display: flex; align-items: center; padding: 0 15px 0 13px; }
.player { display: flex; gap: 14px; padding-top: 2px; }
.history { margin: 6px 0 0 27px; }
.settings { margin-left: auto; }
```
FILE: grid.js
```js
// Sketch grid: one line per 5 mm, a stronger one per 25 mm.
const grid = document.getElementById("grid");
function line(x1, y1, x2, y2, major) {
  const el = document.createElementNS("http://www.w3.org/2000/svg", "line");
  el.setAttribute("x1", x1);
  el.setAttribute("y1", y1);
  el.setAttribute("x2", x2);
  el.setAttribute("y2", y2);
  el.setAttribute("class", major ? "major" : "minor");
  grid.append(el);
}
for (let i = -41; i <= 55; i++) {
  const x = 825 + i * 19.93;
  line(x, 172, x, 968, i % 5 === 0);
}
for (let j = -18; j <= 26; j++) {
  line(0, 636 - j * 18.58, 1920, 650 - j * 18.54, j % 5 === 0);
}
```
